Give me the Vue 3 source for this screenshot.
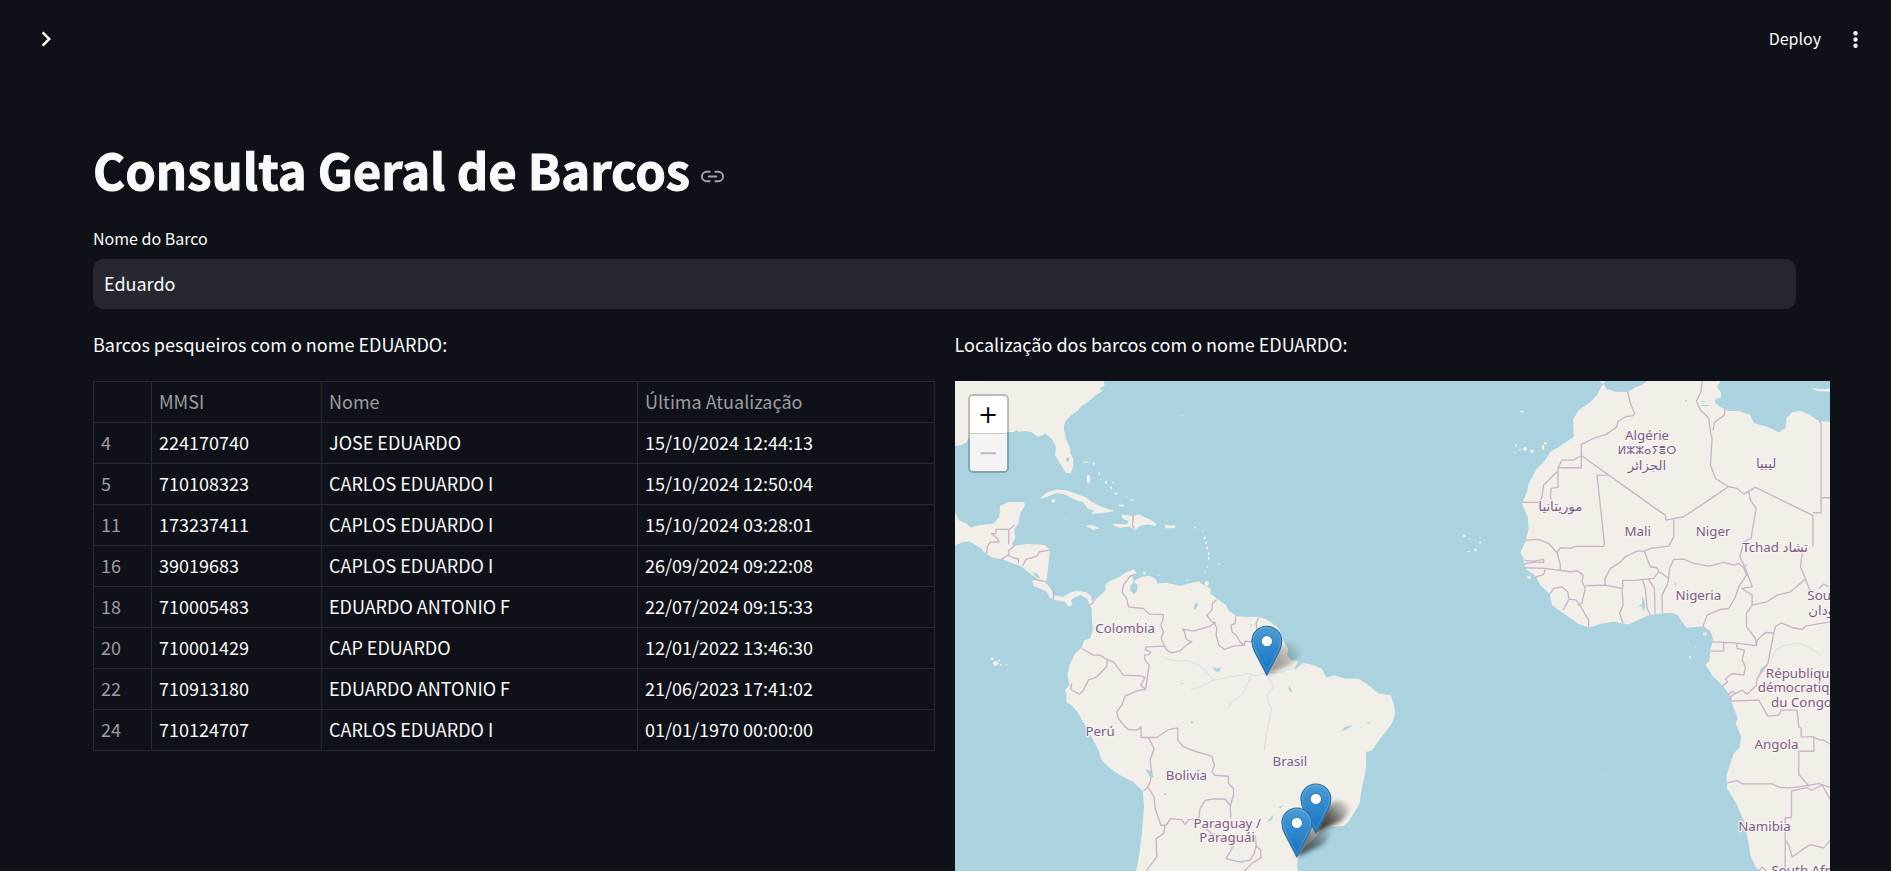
<script setup>
import { ref } from 'vue'

const boatName = ref('Eduardo')

const rows = [
  [4, '224170740', 'JOSE EDUARDO', '15/10/2024 12:44:13'],
  [5, '710108323', 'CARLOS EDUARDO I', '15/10/2024 12:50:04'],
  [11, '173237411', 'CAPLOS EDUARDO I', '15/10/2024 03:28:01'],
  [16, '39019683', 'CAPLOS EDUARDO I', '26/09/2024 09:22:08'],
  [18, '710005483', 'EDUARDO ANTONIO F', '22/07/2024 09:15:33'],
  [20, '710001429', 'CAP EDUARDO', '12/01/2022 13:46:30'],
  [22, '710913180', 'EDUARDO ANTONIO F', '21/06/2023 17:41:02'],
  [24, '710124707', 'CARLOS EDUARDO I', '01/01/1970 00:00:00'],
]

const americasLabels = [
  { x: 525, y: 775, text: 'Colombia' },
  { x: 450, y: 1083, text: 'Perú' },
  { x: 709, y: 1215, text: 'Bolivia' },
  { x: 1019, y: 1172, text: 'Brasil' },
  { x: 831, y: 1357, text: 'Paraguay /' },
  { x: 831, y: 1401, text: 'Paraguái' },
  { x: -18, y: 19, text: 'United States' },
]

const africaLabels = [
  { x: 470, y: 194, text: 'Algérie' },
  { x: 470, y: 238, text: 'ⵍⵣⵣⴰⵢⴻⵔ', small: true },
  { x: 470, y: 284, text: 'الجزائر' },
  { x: 827, y: 280, text: 'ليبيا' },
  { x: 210, y: 408, text: 'موريتانيا' },
  { x: 442, y: 483, text: 'Mali' },
  { x: 668, y: 483, text: 'Niger' },
  { x: 854, y: 531, text: 'Tchad تشاد' },
  { x: 624, y: 674, text: 'Nigeria' },
  { x: 1070, y: 674, text: 'South Sudan' },
  { x: 1022, y: 720, text: 'السودان' },
  { x: 933, y: 908, text: 'République' },
  { x: 933, y: 952, text: 'démocratique' },
  { x: 933, y: 996, text: 'du Congo' },
  { x: 858, y: 1121, text: 'Angola' },
  { x: 822, y: 1368, text: 'Namibia' },
  { x: 957, y: 1500, text: 'South Africa' },
]

// [x, y, rx, ry] of small islands
const americasIslands = [
  [310, 377, 6, 5], [408, 261, 11, 2], [431, 266, 3, 5], [415, 312, 5, 13], [447, 295, 2, 5],
  [452, 312, 3, 2], [468, 322, 3, 5], [483, 338, 3, 5], [490, 322, 4, 2], [498, 356, 4, 4],
  [513, 391, 8, 3], [530, 366, 3, 2], [546, 375, 7, 2], [735, 457, 3, 3], [757, 468, 3, 2],
  [763, 489, 3, 5], [768, 503, 3, 4], [771, 519, 3, 5], [776, 536, 3, 5], [776, 550, 3, 4],
  [771, 575, 2, 3], [764, 590, 2, 3], [807, 567, 3, 3], [583, 594, 4, 5], [625, 600, 4, 2],
  [711, 615, 5, 2], [770, 625, 6, 8], [697, 121, 3, 1], [127, 851, 5, 4], [137, 865, 8, 7],
  [147, 856, 4, 3], [152, 869, 3, 3], [169, 868, 3, 2], [346, 430, 3, 1],
]
const africaIslands = [
  [95, 110, 6, 2], [77, 211, 3, 4], [74, 232, 2, 2], [104, 222, 6, 6], [125, 229, 5, 5],
  [89, 224, 2, 3], [158, 217, 4, 8], [165, 205, 4, 4], [-78, 482, 5, 4], [-61, 492, 4, 2],
  [-31, 488, 2, 2], [-30, 502, 4, 3], [-45, 525, 4, 4], [-65, 529, 5, 2], [643, 776, 6, 5],
  [599, 846, 3, 4], [616, 815, 2, 2], [116, 607, 6, 4], [152, 1021, 3, 1], [336, 1197, 3, 1],
]

const markers = [
  { x: 950, y: 900, shade: 0.45 },
  { x: 1097, y: 1373, shade: 0.95 },
  { x: 1040, y: 1445, shade: 0.75 },
]
</script>

<template>
  <div class="app">
    <header class="topbar">
      <button class="icon-btn" type="button" aria-label="Abrir menu lateral">
        <svg width="30" height="30" viewBox="0 0 24 24" fill="currentColor">
          <path d="M10 6 8.59 7.41 13.17 12l-4.58 4.59L10 18l6-6z" />
        </svg>
      </button>
      <div class="actions">
        <button class="deploy" type="button">Deploy</button>
        <button class="icon-btn" type="button" aria-label="Mais opções">
          <svg width="25" height="25" viewBox="0 0 24 24" fill="currentColor">
            <circle cx="12" cy="6" r="2.1" /><circle cx="12" cy="12" r="2.1" /><circle cx="12" cy="18" r="2.1" />
          </svg>
        </button>
      </div>
    </header>

    <main class="content">
      <div class="title">
        <h1 id="consulta">Consulta Geral de Barcos</h1>
        <a class="anchor" href="#consulta" aria-label="Link para esta seção">
          <svg width="23" height="23" viewBox="0 0 24 24" fill="none" stroke="currentColor" stroke-width="2" stroke-linecap="round" stroke-linejoin="round">
            <path d="M15 7h3a5 5 0 0 1 5 5 5 5 0 0 1-5 5h-3m-6 0H6a5 5 0 0 1-5-5 5 5 0 0 1 5-5h3" />
            <path d="M8 12h8" />
          </svg>
        </a>
      </div>

      <div class="field">
        <label for="boat">Nome do Barco</label>
        <input id="boat" v-model="boatName" type="text" autocomplete="off" />
      </div>

      <div class="columns">
        <section class="column">
          <p>Barcos pesqueiros com o nome EDUARDO:</p>
          <table>
            <colgroup>
              <col class="c-index" /><col class="c-mmsi" /><col class="c-name" /><col />
            </colgroup>
            <thead>
              <tr><th></th><th>MMSI</th><th>Nome</th><th>Última Atualização</th></tr>
            </thead>
            <tbody>
              <tr v-for="row in rows" :key="row[0]">
                <th scope="row">{{ row[0] }}</th>
                <td>{{ row[1] }}</td>
                <td>{{ row[2] }}</td>
                <td>{{ row[3] }}</td>
              </tr>
            </tbody>
          </table>
        </section>

        <section class="column">
          <p>Localização dos barcos com o nome EDUARDO:</p>
          <div class="map">
            <svg class="world" viewBox="15 18 2625 1875" preserveAspectRatio="xMinYMin slice">
              <defs>
                <linearGradient id="pin" x1="0" y1="0" x2="0" y2="1">
                  <stop offset="0" stop-color="#4a9dd3" />
                  <stop offset="1" stop-color="#126fc6" />
                </linearGradient>
                <linearGradient id="shade" gradientUnits="userSpaceOnUse" x1="0" y1="0" x2="95" y2="-80">
                  <stop offset="0" stop-color="#000" stop-opacity="0.9" />
                  <stop offset="0.5" stop-color="#000" stop-opacity="0.65" />
                  <stop offset="1" stop-color="#000" stop-opacity="0.1" />
                </linearGradient>
                <filter id="soft" x="-30%" y="-30%" width="160%" height="160%">
                  <feGaussianBlur stdDeviation="7" />
                </filter>
              </defs>

              <g class="land">
                <path d="M15 18H462L463 32 448 40 457 47 435 62 415 80 395 92 385 105 362 122 345 140 341 160 347 190 358 215 361 235 369 250 370 272 362 294 348 294 330 265 315 240 318 215 305 192 287 176 263 186 245 172 225 168 205 170 200 166 190 171 120 172 60 185 48 203 35 210 15 213z" />
                <path d="M15 413 28 436 50 446 62 457 90 450 130 446 148 425 150 393 175 381 222 381 225 392 210 415 205 445 193 460 195 490 185 508 200 511 230 507 262 508 285 510 300 525 296 560 292 600 287 622 305 645 312 662 340 665 360 652 385 646 410 652 428 668 436 685 428 700 418 690 412 672 392 660 372 668 362 676 368 690 355 694 345 680 320 676 300 668 290 650 270 640 250 632 247 616 262 612 235 592 215 575 205 570 180 562 155 552 130 549 108 536 90 517 60 500 40 500 15 512z" />
                <path d="M268 372 290 352 320 343 350 346 385 358 410 368 425 380 455 396 494 408 470 412 422 417 432 406 412 400 400 382 370 372 345 358 320 354 290 366z" />
                <path d="M512 418 545 422 570 418 585 428 600 433 619 446 616 453 595 448 570 452 553 466 540 454 510 458 490 452 492 446 530 448 535 438 520 432z" />
                <path d="M406 453 420 450 435 453 450 460 430 464zM645 450 677 451 675 459 645 460z" />
                <path d="M425 690 440 670 452 660 465 647 468 625 485 615 510 605 525 593 550 583 560 593 545 603 552 617 575 605 600 603 618 613 622 625 650 623 690 633 715 625 745 619 765 633 782 640 780 655 805 673 828 690 835 705 858 723 885 725 925 725 950 733 980 755 990 770 998 795 1014 820 1010 840 1025 855 1045 857 1030 885 1042 878 1060 863 1090 870 1115 880 1128 908 1150 900 1185 910 1225 911 1255 930 1285 955 1322 960 1330 985 1335 1015 1325 1045 1290 1090 1265 1126 1247 1130 1248 1175 1240 1215 1232 1255 1228 1285 1198 1335 1180 1352 1140 1355 1105 1375 1080 1400 1045 1435 1043 1455 1040 1470 1044 1488 1020 1530 960 1600 900 1893H540L550 1530 568 1435 575 1375 582 1295 578 1247 550 1220 510 1200 475 1175 455 1155 445 1125 425 1085 405 1050 385 1015 365 990 348 980 350 955 344 945 358 930 352 900 358 870 375 835 395 817 402 795 420 790 428 765 425 715z" />
                <ellipse v-for="(i, n) in americasIslands" :key="n" :cx="i[0]" :cy="i[1]" :rx="i[2]" :ry="i[3]" />
              </g>

              <g class="borders">
                <path d="M110 536 112 515 120 502 148 500 140 488 125 476 138 475 138 463H178L193 450M176 463V508M195 510 175 528 178 538 155 552M175 540 190 548 205 552V565M218 572 228 552 245 548 262 542 268 530 300 525M250 612 290 620M310 645V672M425 665 430 682 416 692M550 420 547 450 553 462" />
                <path d="M555 597 540 603 520 630 516 652 530 670 535 695 580 700 598 717 640 718 638 735 632 750 640 770 633 790 642 810 650 825 665 833 690 827 708 810 725 800 708 793 703 770 697 762 730 768 780 753 793 743 800 760 798 780 806 810 823 823 850 813 882 810 870 800 858 780 845 770 843 750 855 745 857 723" />
                <path d="M800 673 787 685 785 705 770 720 785 740 797 743M925 727 918 745 920 770 925 790 900 800 885 798 882 810M642 813 587 815V825L602 830 598 837 583 840 585 855 597 870 592 905 587 940" />
                <path d="M395 820 430 840 450 840 470 853 490 860 520 900 570 902 585 907 572 930 587 942 560 947 525 963 515 990 500 1010 505 1030 522 1052 535 1063 560 1065 573 1055V1087H620L655 1063 683 1058V1095L700 1115 740 1130 785 1143 793 1170 785 1190 795 1200 835 1203V1225L850 1240V1260L840 1293 842 1330M472 855 470 875 440 905 415 915 400 945 388 957 362 943 365 925" />
                <path d="M595 1087 612 1120 600 1155 605 1195 600 1220 592 1237 580 1247M595 1237 612 1265 615 1300 632 1350H648L662 1330 695 1333 705 1348 715 1333 745 1333 750 1300 765 1275 795 1271 825 1272 840 1290M760 1355 785 1375 850 1393 845 1420 828 1450 865 1460 900 1455 912 1435 918 1410 915 1380M645 1352 640 1375 618 1390 620 1445 605 1465 588 1488M918 1413 932 1425V1447L905 1465 882 1488" />
              </g>
              <g class="rivers">
                <path d="M640 848 680 858 715 855 745 870 770 890 790 915 840 905 870 900 895 895 915 902 945 895 1000 890 1030 875M722 945 745 935 790 915M900 900 895 920M832 1000 850 975 875 960 890 930 905 910M955 905 970 935 952 960 955 985 965 1000 950 1070 942 1125" />
              </g>
              <g class="water">
                <path d="M548 611 552 620 563 632 560 650 552 657 541 648 541 632 549 624zM738 682 744 685 740 697 733 705 730 698zM585 1182 598 1184 612 1206 600 1205zM1015 932 1022 937 1025 950 1016 945zM1170 1068 1187 1054 1208 1050 1190 1062zM785 875 800 880 812 877 808 890 796 889zM246 590 262 596 272 612 258 606zM900 745 906 748 902 754zM985 1295 1000 1290 990 1300zM948 1342 970 1318 965 1334z" />
                <ellipse cx="353" cy="253" rx="5" ry="6" /><ellipse cx="726" cy="1041" rx="4" ry="3" />
                <ellipse cx="695" cy="925" rx="5" ry="2" /><ellipse cx="645" cy="1256" rx="4" ry="3" />
                <ellipse cx="875" cy="1460" rx="7" ry="3" /><ellipse cx="1255" cy="1043" rx="6" ry="2" />
              </g>

              <g transform="translate(1620 0)">
                <g class="land">
                  <path d="M328 18H345L338 27z" />
                  <path d="M342 28 348 42 375 50 412 50 432 38 455 30 470 18H690L680 35 693 55 690 68 676 72 672 80 688 95 715 108 745 108 780 120 790 145 830 155 865 172 885 160 888 130 905 112 930 108 955 118 985 138 1020 140V1893H880L808 1488 795 1475 780 1440 772 1390 760 1335 735 1280 710 1240 708 1200 718 1170 730 1135 748 1115 752 1085 736 1045 742 1030 725 985 715 955 695 930 665 900 645 867 656 860 660 825 668 790 660 768 640 753 588 758 575 740 562 720 545 713 500 716 470 722 415 748 370 740 335 745 295 757 262 745 220 715 185 690 178 657 150 630 133 600 105 582 100 550 90 532 105 500 115 460 112 425 95 385 110 350 115 325 140 280 165 255 180 230 215 210 250 185 248 135 265 105 300 82 320 60 335 30z" />
                  <path d="M960 40 1000 43 1020 40V50L985 49z" />
                  <ellipse v-for="(i, n) in africaIslands" :key="n" :cx="i[0]" :cy="i[1]" :rx="i[2]" :ry="i[3]" />
                </g>
                <g class="borders">
                  <path d="M412 50 420 85 433 115 428 122 405 125 382 140 380 155 348 178 310 190 273 208V278H203L215 255 250 255 272 242M203 278V337L182 340 180 365 185 380M200 290 160 330 155 365 145 382H95M275 243 495 400 525 420 527 435 580 425 640 385 714 335M352 300H320L342 505 340 514H255L240 520 210 518 200 532 210 570V585" />
                  <path d="M107 495 145 493 175 505 200 532M103 556 130 558 160 553V562L130 562 103 566M100 578 165 580 240 590M165 582 160 598 138 605 135 612M240 590 262 587 278 600 275 620 285 640 280 660 275 685 262 690M178 657 190 640 215 635 232 650 236 672 218 705M236 672 258 675 270 692 280 710 295 735V757M285 632 345 630 395 640 398 690 388 715 398 745" />
                  <path d="M345 630 343 612 360 580 385 565 405 545 440 528 462 528 480 520 535 513 550 485V433M462 528 470 550 480 575 500 578 505 590 490 610 440 615 397 616V640M457 616 465 640 470 700 480 720M475 613 492 640 494 715M505 590 515 595 535 610 530 630 515 660 516 715M535 610 537 580 550 553 580 552 610 565 655 573 700 562 730 570 745 565 760 578 768 600 745 635 735 665 715 700 690 703 650 720 638 753" />
                  <path d="M775 348 780 375 797 400 790 440 782 490 760 500 748 545 765 580 780 620 785 635 755 640 785 660V690L768 715V755L795 790 798 812M714 335 740 340 760 357 795 337 967 421V515M967 413H992V145L987 138M992 368H1020M935 535 930 575 945 612 960 650M945 612 900 650 860 660 830 680 785 690M635 18 632 50 618 78 630 105 655 130 660 170 665 190 660 270 675 310 714 335M703 100 702 120 672 142 668 165M985 640 1000 627 1015 635" />
                  <path d="M798 812 800 795 825 772 850 773 855 755 872 743 905 757 935 763 945 753 1020 740M850 773 840 825 832 865 800 910 798 930 770 957 755 945 735 955 720 965 722 975M712 960 725 948 735 955M665 800 735 803 798 812M700 803V828H662M738 803 740 820 762 825 755 855 765 875 760 900 725 895 705 910 712 920 695 933M720 978 805 975 832 1023 865 1020 872 1005H920L925 1055 932 1060V1085H970V1128H925V1198L955 1232M970 1085 985 1093 1000 1095 1020 1107" />
                  <path d="M710 1223 740 1216 755 1226H845L870 1237 910 1237 985 1225 1020 1237M1020 1273 995 1230 962 1245 950 1237 903 1247V1327H884V1488M884 1395 895 1410 905 1445 940 1420 960 1408 1000 1418 1020 1393M805 1488 815 1475 828 1488" />
                </g>
                <g class="water">
                  <ellipse cx="768" cy="570" rx="3" ry="4" /><ellipse cx="555" cy="628" rx="2" ry="6" />
                  <path d="M455 660 460 672 465 690 460 712 455 695 442 692 455 688zM803 900 812 880 835 862 820 880zM630 79H645V81H630zM632 90H655V93H632zM585 75H590V81H585z" />
                </g>
                <g class="rivers"><path d="M840 860 855 825 880 810 925 804 950 815 990 838" /></g>
                <g class="labels">
                  <text v-for="l in africaLabels" :key="l.text" :class="{ small: l.small }" :x="l.x" :y="l.y">{{ l.text }}</text>
                </g>
              </g>

              <g class="labels">
                <text v-for="l in americasLabels" :key="l.text" :x="l.x" :y="l.y">{{ l.text }}</text>
              </g>

              <g v-for="m in markers" :key="m.x" :transform="`translate(${m.x} ${m.y})`">
                <path d="M0 0 25-65Q55-115 95-88 112-65 75-35z" fill="url(#shade)" filter="url(#soft)" :opacity="m.shade" />
              </g>
              <g v-for="m in markers" :key="m.y" :transform="`translate(${m.x} ${m.y})`">
                <path d="M0 0-35-67C-41-78-45-90-45-102A45 45 0 0 1 45-102C45-90 41-78 35-67z" fill="url(#pin)" stroke="#2e6c97" stroke-width="3" />
                <path d="M0-11-31-69C-37-80-41-91-41-102A41 41 0 0 1 41-102C41-91 37-80 31-69z" fill="none" stroke="#fff" stroke-opacity="0.12" stroke-width="4" />
                <circle cx="0" cy="-102" r="17" fill="#fff" stroke="#2f7ab5" stroke-width="3" />
              </g>
            </svg>
            <div class="zoom">
              <button type="button" aria-label="Aumentar zoom">+</button>
              <button type="button" aria-label="Diminuir zoom" disabled>−</button>
            </div>
          </div>
        </section>
      </div>
    </main>
  </div>
</template>

<style>
body {
  margin: 0;
  background: #0e1117;
}
</style>

<style scoped>
.app {
  height: 100vh;
  overflow: hidden;
  background: #0e1117;
  color: #fafafa;
  font-family: "Noto Sans CJK SC", "Noto Sans", sans-serif;
  font-size: 18px;
  line-height: 26px;
}
button {
  padding: 0;
  border: 0;
  background: none;
  color: inherit;
  font: inherit;
  cursor: pointer;
}
svg {
  display: block;
}
.topbar {
  display: flex;
  align-items: center;
  justify-content: space-between;
  height: 78px;
  padding: 0 23px 0 31px;
}
.actions {
  display: flex;
  align-items: center;
  gap: 22px;
}
.deploy {
  padding-bottom: 2px;
  font-size: 16px;
  line-height: 24px;
}
.content {
  padding: 61px 95px 0 93px;
}
.title {
  display: flex;
  align-items: center;
  gap: 11px;
  margin-bottom: 27px;
}
h1 {
  margin: 0;
  font-size: 49px;
  line-height: 60px;
  font-weight: 700;
  -webkit-text-stroke: 1px #fafafa;
}
.anchor {
  padding-top: 14px;
  color: #a3a4a7;
}
.field {
  display: flex;
  flex-direction: column;
  gap: 9px;
  margin-bottom: 22px;
}
label {
  font-size: 16px;
  line-height: 24px;
}
input {
  box-sizing: border-box;
  width: 100%;
  height: 50px;
  padding: 0 11px 2px;
  border: 0;
  border-radius: 10px;
  outline: 0;
  background: #262730;
  color: #fafafa;
  font: inherit;
}
.columns {
  display: grid;
  grid-template-columns: 1fr 1fr;
  gap: 20px;
}
.column {
  min-width: 0;
}
p {
  margin: 0 0 24px;
}
table {
  width: 100%;
  table-layout: fixed;
  border-collapse: collapse;
}
.c-index {
  width: 58px;
}
.c-mmsi {
  width: 170px;
}
.c-name {
  width: 316px;
}
th,
td {
  padding: 6px 7px 8px;
  border: 1px solid #26292e;
  text-align: left;
  font-weight: 400;
}
th {
  height: 26px;
  color: #9c9da0;
}
.map {
  position: relative;
  margin-right: -34px;
  background: #aad3df;
}
.world {
  width: 100%;
  height: 625px;
}
.land {
  fill: #f2efe9;
}
.water {
  fill: #aad3df;
}
.borders {
  fill: none;
  stroke: #c9b3c8;
  stroke-width: 4;
  stroke-linejoin: round;
}
.rivers {
  fill: none;
  stroke: #aad3df;
  stroke-opacity: 0.45;
  stroke-width: 3;
  stroke-linejoin: round;
}
.labels {
  fill: #7d5c85;
  stroke: #f7f4f2;
  stroke-width: 7;
  stroke-linejoin: round;
  paint-order: stroke;
  font-family: "Noto Sans", "DejaVu Sans", sans-serif;
  font-size: 40px;
  text-anchor: middle;
}
.labels .small {
  font-size: 34px;
}
.zoom {
  position: absolute;
  top: 13px;
  left: 13px;
  display: flex;
  flex-direction: column;
  width: 37px;
  border: 2px solid rgba(0, 0, 0, 0.22);
  border-radius: 5px;
  background-clip: padding-box;
}
.zoom button {
  height: 37px;
  border-radius: 0 0 3px 3px;
  background: #fff;
  color: #000;
  font-family: "DejaVu Sans", sans-serif;
  font-size: 24px;
}
.zoom button:first-child {
  height: 38px;
  border-bottom: 1px solid #ccc;
  border-radius: 3px 3px 0 0;
}
.zoom button:disabled {
  background: #f4f4f4;
  color: #bbb;
}
</style>
